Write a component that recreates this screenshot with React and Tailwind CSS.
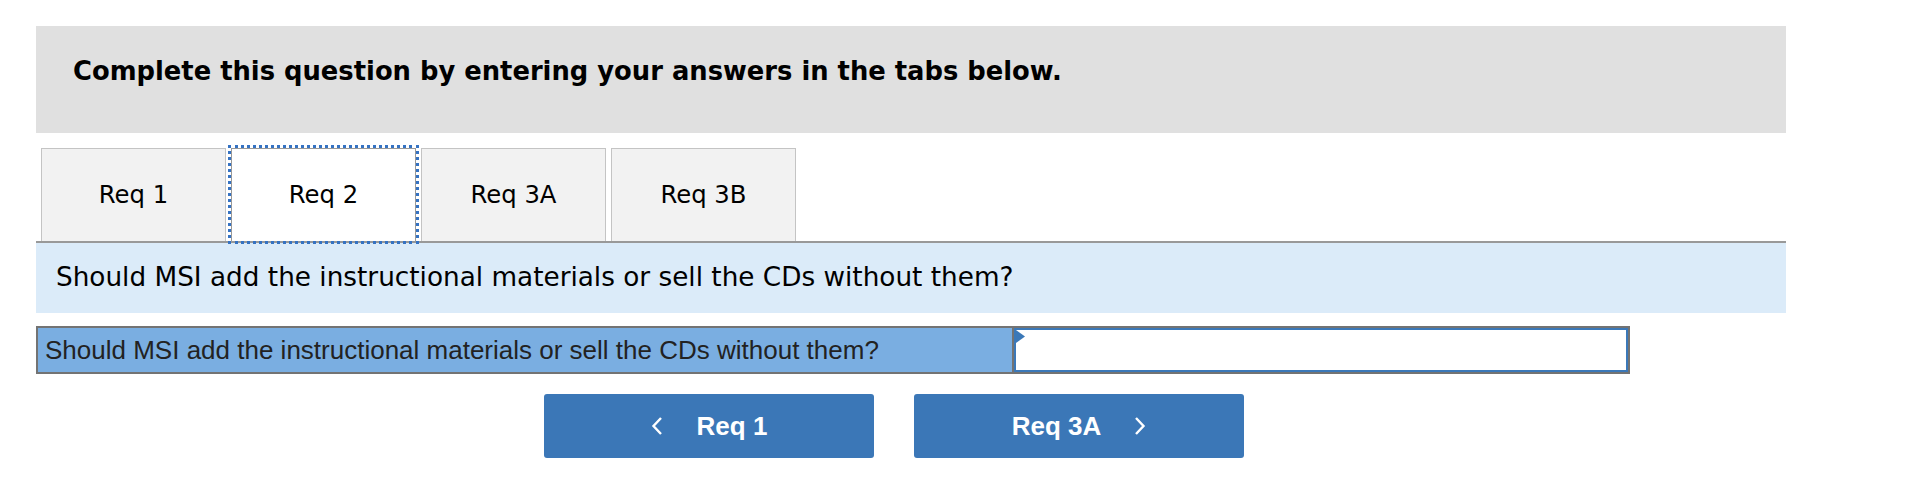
import React from 'react';

// Tabs across the top of the question
const tabs = ['Req 1', 'Req 2', 'Req 3A', 'Req 3B'];

const Chevron = ({ dir }) => (
  <svg width="12" height="20" viewBox="0 0 12 20" fill="none">
    {dir === 'left' ? (
      <polyline points="10,2 2.5,10 10,18" stroke="white" strokeWidth="2.4" />
    ) : (
      <polyline points="2,2 9.5,10 2,18" stroke="white" strokeWidth="2.4" />
    )}
  </svg>
);

function App() {
  const active = 1;
  const question = 'Should MSI add the instructional materials or sell the CDs without them?';

  return (
    <div className="min-h-[498px] bg-white pl-[36px] pr-[124px] pt-[26px] font-['DejaVu_Sans',Verdana,sans-serif] text-black">
      {/* instructions header */}
      <div className="h-[107px] bg-[#e0e0e0] pl-[37px] pt-[30px]">
        <p className="text-[25.8px] font-bold leading-[30px]">
          Complete this question by entering your answers in the tabs below.
        </p>
      </div>

      {/* tab strip */}
      <div className="mt-[15px] flex gap-[5px] border-b-2 border-[#999999] pl-[5px]">
        {tabs.map((t, i) => (
          <div
            key={t}
            className={`flex h-[93px] w-[185px] items-center justify-center border border-b-0 text-[24.3px] ${
              i === active
                ? 'border-[#999999] bg-white outline-[3px] outline-offset-0 outline-dotted outline-[#3572c2]'
                : 'border-[#c4c4c4] bg-[#f2f2f2]'
            }`}
          >
            {t}
          </div>
        ))}
      </div>

      {/* question prompt */}
      <div className="flex h-[70px] items-center bg-[#dbebf9] pl-[20px] text-[26.3px]">
        {question}
      </div>

      {/* answer row */}
      <div className="mt-[13px] flex h-[48px] w-[1594px] border-2 border-[#737373]">
        <div className="flex w-[974px] items-center bg-[#7aaee1] pl-[7px] font-['Liberation_Sans',Arial,sans-serif] text-[26px] text-[#222222]">
          {question}
        </div>
        <div className="relative flex-1 border-l-2 border-[#737373]">
          <div className="h-full w-full border-2 border-[#3b78b8] bg-white"></div>
          <svg className="absolute left-[2px] top-[2px]" width="9" height="13" viewBox="0 0 9 13">
            <polygon points="0,0 9,6.5 0,13" fill="#3b78b8" />
          </svg>
        </div>
      </div>

      {/* prev / next */}
      <div className="mt-[20px] flex gap-[40px] pl-[508px] font-['Liberation_Sans',Arial,sans-serif] text-[26px] font-bold text-white">
        <button className="flex h-[64px] w-[330px] items-center justify-center gap-[34px] rounded-[3px] bg-[#3b77b7]">
          <Chevron dir="left" />
          <span>Req 1</span>
        </button>
        <button className="flex h-[64px] w-[330px] items-center justify-center gap-[33px] rounded-[3px] bg-[#3b77b7]">
          <span>Req 3A</span>
          <Chevron dir="right" />
        </button>
      </div>
    </div>
  );
}

export default App;
